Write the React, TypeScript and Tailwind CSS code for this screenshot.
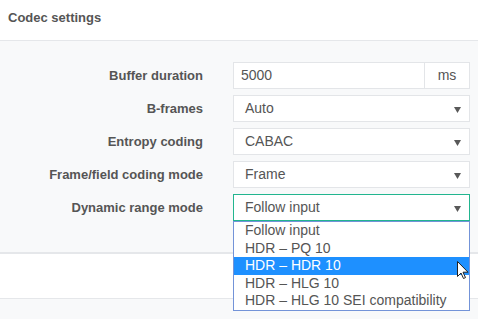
import React from 'react'

const font = { fontFamily: '"Liberation Sans", Arial, sans-serif' }

function Caret() {
  return (
    <svg width="7" height="6" viewBox="0 0 7 6" className="absolute right-[8px] top-[11px]">
      <path d="M0 0 H7 L3.5 6 Z" fill="#595959" />
    </svg>
  )
}

function Row({ label, children }: { label: string; children: React.ReactNode }) {
  return (
    <div className="flex items-center h-[27px]">
      <div className="w-[203px] text-right text-[13px] font-bold text-[#555]">{label}</div>
      <div className="ml-[30px] w-[237px] h-full relative">{children}</div>
    </div>
  )
}

function FakeSelect({ value, focused }: { value: string; focused?: boolean }) {
  return (
    <div
      className={
        'relative h-full bg-white border flex items-center pl-[11px] text-[14px] text-[#555] ' +
        (focused ? 'border-[#22b58f]' : 'border-[#e3e5e8]')
      }
    >
      {value}
      <Caret />
    </div>
  )
}

const options = ['Follow input', 'HDR – PQ 10', 'HDR – HDR 10', 'HDR – HLG 10', 'HDR – HLG 10 SEI compatibility']

export default function App() {
  return (
    <div className="w-[478px] h-[319px] bg-[#f8f9fa] overflow-hidden" style={font}>
      <div className="h-[41px] bg-white border-b border-[#e5e7ea] flex items-center pl-[8px] pb-[5px]">
        <span className="text-[13px] font-bold text-[#555]">Codec settings</span>
      </div>

      <div className="h-[211px] pt-[21px] flex flex-col gap-[6px]">
        <Row label="Buffer duration">
          <div className="flex h-full bg-white border border-[#e3e5e8] text-[14px] text-[#555]">
            <div className="flex-1 flex items-center pl-[7px]">5000</div>
            <div className="w-[45px] border-l border-[#e3e5e8] flex items-center justify-center">ms</div>
          </div>
        </Row>
        <Row label="B-frames">
          <FakeSelect value="Auto" />
        </Row>
        <Row label="Entropy coding">
          <FakeSelect value="CABAC" />
        </Row>
        <Row label="Frame/field coding mode">
          <FakeSelect value="Frame" />
        </Row>
        <Row label="Dynamic range mode">
          <FakeSelect value="Follow input" focused />
          <div className="absolute top-full left-0 w-full z-10 bg-white border border-[#7393d8] text-[14px] text-[#555] leading-[17.6px]">
            {options.map((o, i) => (
              <div
                key={o}
                className={'pl-[11px] h-[17.6px] ' + (i === 2 ? 'bg-[#1e90ff] text-white relative' : '')}
              >
                {o}
                {i === 2 && (
                  <svg width="12" height="19" viewBox="0 0 12 19" className="absolute left-[223px] top-[4px]">
                    <path d="M0.5 0.5 V15.5 L4 12 L6.5 17.5 L8.5 16.6 L6 11.2 H11 Z" fill="#fff" stroke="#222" strokeWidth="1" strokeLinejoin="round" />
                  </svg>
                )}
              </div>
            ))}
          </div>
        </Row>
      </div>

      <div className="h-[47px] bg-white border-t-2 border-b border-[#e5e7ea]" />
    </div>
  )
}
